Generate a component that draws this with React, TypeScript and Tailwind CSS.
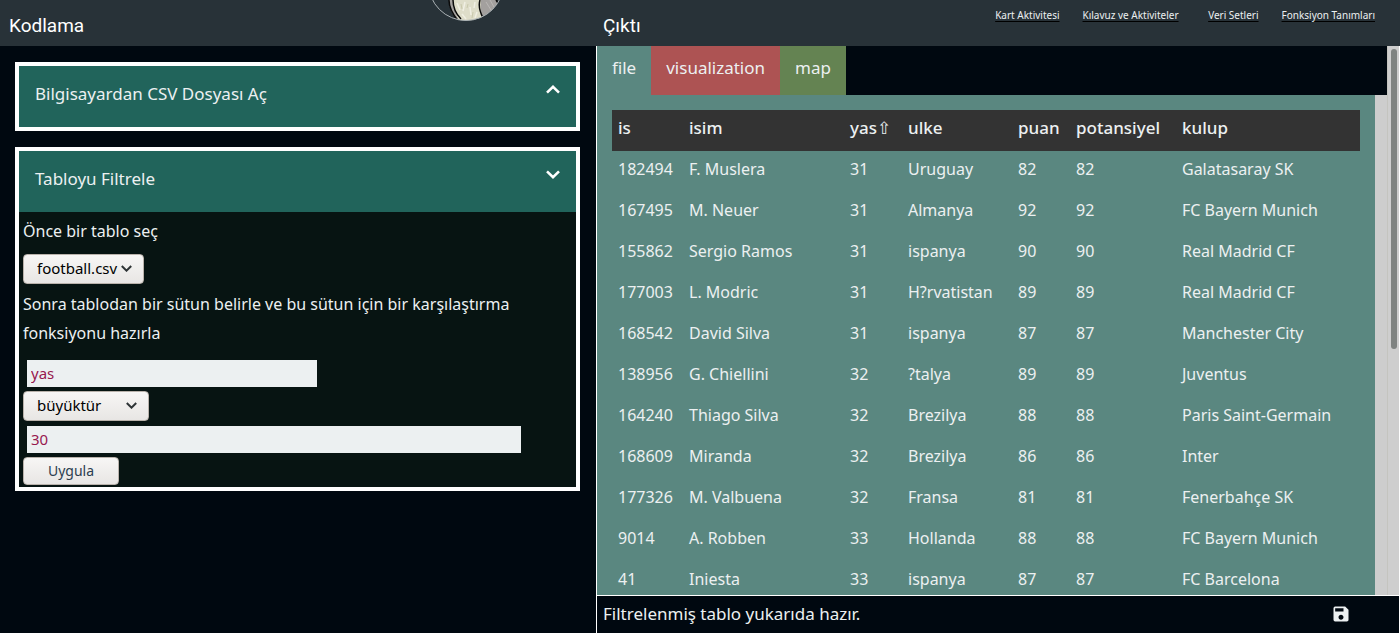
import React from "react";
import { MdSave } from "react-icons/md";

const links = ["Kart Aktivitesi", "Kılavuz ve Aktiviteler", "Veri Setleri", "Fonksiyon Tanımları"];

const columns = [
  { name: "is", width: "w-[71px]" },
  { name: "isim", width: "w-[161px]" },
  { name: "yas⇧", width: "w-[58px]" },
  { name: "ulke", width: "w-[110px]" },
  { name: "puan", width: "w-[58px]" },
  { name: "potansiyel", width: "w-[106px]" },
  { name: "kulup", width: "" },
];

const rows = [
  ["182494", "F. Muslera", "31", "Uruguay", "82", "82", "Galatasaray SK"],
  ["167495", "M. Neuer", "31", "Almanya", "92", "92", "FC Bayern Munich"],
  ["155862", "Sergio Ramos", "31", "ispanya", "90", "90", "Real Madrid CF"],
  ["177003", "L. Modric", "31", "H?rvatistan", "89", "89", "Real Madrid CF"],
  ["168542", "David Silva", "31", "ispanya", "87", "87", "Manchester City"],
  ["138956", "G. Chiellini", "32", "?talya", "89", "89", "Juventus"],
  ["164240", "Thiago Silva", "32", "Brezilya", "88", "88", "Paris Saint-Germain"],
  ["168609", "Miranda", "32", "Brezilya", "86", "86", "Inter"],
  ["177326", "M. Valbuena", "32", "Fransa", "81", "81", "Fenerbahçe SK"],
  ["9014", "A. Robben", "33", "Hollanda", "88", "88", "FC Bayern Munich"],
  ["41", "Iniesta", "33", "ispanya", "87", "87", "FC Barcelona"],
];

function Chevron({ up = false, className }: { up?: boolean; className: string }) {
  return (
    <svg viewBox="0 0 14 9" fill="none" stroke="currentColor" className={className} aria-hidden="true">
      <path d={up ? "M1 7.6 7 1.8l6 5.8" : "M1 1.4l6 5.8 6-5.8"} strokeWidth="2.6" />
    </svg>
  );
}

function Logo() {
  return (
    <svg width="78" height="22" viewBox="0 0 78 22" aria-hidden="true">
      <defs>
        <clipPath id="badge">
          <circle cx="39" cy="-17" r="37.5" />
        </clipPath>
      </defs>
      <g clipPath="url(#badge)">
        <path d="M22 0h48v22H32C25 15 22 8 22 0z" fill="#a3a09e" />
        <path d="M26 0h28c-1 8 0 14 3 22H33C29 15 26 8 26 0z" fill="#deddc9" />
        <path d="M30 3l3 7M38 2l-2 9M43 7l1 8M48 2l-1 6M35 14l4 5M50 12l-2 6" stroke="#f0efe3" strokeWidth="1.5" />
        <path d="M34 4l1 5M41 4l-1 4M46 12l-1 6" stroke="#c9c8ac" />
        <path d="M22 0c0 8 4 15 10 22M26 0c0 7 3 14 8 19M53 0c-2 6 0 12 3 18M69 0l4 6" stroke="#0a0a0a" strokeWidth="1.5" fill="none" />
        <path d="M59 2l5 8M63 0l4 7" stroke="#bab7b5" />
      </g>
      <circle cx="39" cy="-17" r="37.5" fill="none" stroke="#aab1b4" />
    </svg>
  );
}

function Picker({ label, value, width }: { label: string; value: string; width: string }) {
  return (
    <div className={`relative ${width}`}>
      <select
        aria-label={label}
        defaultValue={value}
        className="block h-[30px] w-full appearance-none rounded border border-[#b9b2ab] bg-linear-to-b from-[#f7f6f5] to-[#e8e6e4] pb-[2px] pl-[13px] text-[15px] text-black"
      >
        <option>{value}</option>
      </select>
      <Chevron className="pointer-events-none absolute right-3 top-[11px] w-[11px] text-[#2e3436]" />
    </div>
  );
}

function PanelHeader({ title, up = false }: { title: string; up?: boolean }) {
  return (
    <button type="button" className="flex h-[61px] w-full items-start justify-between bg-[#21645b] px-4 pt-4 text-left text-[17px]">
      <span className="leading-6">{title}</span>
      <Chevron up={up} className="mt-[3px] w-[14px] text-white" />
    </button>
  );
}

export default function App() {
  return (
    <div className="flex h-screen flex-col overflow-hidden bg-[#000810] font-['Noto_Sans','Open_Sans',sans-serif] text-base text-[#ecf0f1]">
      <header className="relative grid h-[46px] shrink-0 grid-cols-[596fr_804fr] bg-[#283238]">
        <h1 className="pl-[9px] pt-3 font-[Roboto,sans-serif] text-[19px] leading-7 text-white">Kodlama</h1>
        <div className="flex justify-between pl-[7px]">
          <h2 className="pt-3 font-[Roboto,sans-serif] text-[19px] leading-7 text-white">Çıktı</h2>
          <nav className="flex gap-[23px] pr-[25px] pt-[7px] text-[10px] leading-4">
            {links.map((link) => (
              <a key={link} href="#" className="min-w-[57px] text-right underline decoration-black underline-offset-2">
                {link}
              </a>
            ))}
          </nav>
        </div>
        <div className="absolute left-1/3 top-0 -ml-10">
          <Logo />
        </div>
      </header>

      <main className="grid min-h-0 flex-1 grid-cols-[596fr_804fr]">
        <section className="flex min-w-0 flex-col gap-4 overflow-hidden pl-[15px] pr-4 pt-4">
          <div className="border-4 border-white">
            <PanelHeader title="Bilgisayardan CSV Dosyası Aç" up />
          </div>
          <div className="border-4 border-white bg-[#071412]">
            <PanelHeader title="Tabloyu Filtrele" />
            <form className="px-1 pb-[2px] pt-[5px]" onSubmit={(e) => e.preventDefault()}>
              <p className="pb-2 leading-[29px]">Önce bir tablo seç</p>
              <Picker label="Tablo" value="football.csv" width="w-[121px]" />
              <p className="py-[6px] leading-[29px]">
                Sonra tablodan bir sütun belirle ve bu sütun için bir karşılaştırma fonksiyonu hazırla
              </p>
              <input
                aria-label="Sütun"
                defaultValue="yas"
                className="mx-1 mb-1 mt-[6px] block h-[27px] w-[290px] bg-[#ecf0f1] px-1 pb-[2px] text-[15px] text-[#97184f]"
              />
              <Picker label="Karşılaştırma" value="büyüktür" width="w-[126px]" />
              <input
                aria-label="Değer"
                defaultValue="30"
                className="mx-1 mb-1 mt-[5px] block h-[27px] w-[494px] bg-[#ecf0f1] px-1 pb-[2px] text-[15px] text-[#97184f]"
              />
              <button
                type="submit"
                className="block h-[28px] w-24 rounded border border-[#b9b2ab] bg-linear-to-b from-[#f7f6f5] to-[#e8e6e4] text-sm text-[#2c3e50]"
              >
                Uygula
              </button>
            </form>
          </div>
        </section>

        <section className="flex min-h-0 min-w-0 flex-col border-x border-white">
          <div className="flex min-h-0 flex-1 bg-[#cdcdcd]">
            <div className="flex min-w-0 flex-1 flex-col">
              <div className="flex h-[49px] shrink-0 bg-[#000810] text-[17px]">
                <button type="button" className="bg-[#5a8780] px-[15px] pb-[6px]">file</button>
                <button type="button" className="bg-[#ad5353] px-[15px] pb-[6px]">visualization</button>
                <button type="button" className="bg-[#648352] px-[15px] pb-[6px]">map</button>
              </div>
              <div className="mr-3 min-h-0 flex-1 overflow-hidden bg-[#5a8780] p-[15px]">
                <table className="w-full table-fixed text-left">
                  <thead className="bg-[#333333] text-[17px]">
                    <tr>
                      {columns.map((column) => (
                        <th key={column.name} className={`h-[41px] whitespace-nowrap px-[6px] pb-[6px] font-medium ${column.width}`}>
                          {column.name}
                        </th>
                      ))}
                    </tr>
                  </thead>
                  <tbody>
                    {rows.map((row) => (
                      <tr key={row[0]}>
                        {row.map((cell, i) => (
                          <td key={i} className="h-[41px] whitespace-nowrap px-[6px] pb-[6px]">
                            {cell}
                          </td>
                        ))}
                      </tr>
                    ))}
                  </tbody>
                </table>
              </div>
            </div>
            <div className="w-3 shrink-0 border-l border-[#c4c4bf] bg-[#cecece] px-[2px] pt-[3px]">
              <div className="mx-auto h-[55%] w-[6px] rounded-full bg-[#7f8381]" />
            </div>
          </div>
          <footer className="flex h-[38px] shrink-0 items-center justify-between border-t border-white pb-[2px] pl-[6px] pr-12">
            <span className="text-[17px] leading-6">Filtrelenmiş tablo yukarıda hazır.</span>
            <button type="button" aria-label="Kaydet">
              <MdSave size={20} />
            </button>
          </footer>
        </section>
      </main>
    </div>
  );
}
